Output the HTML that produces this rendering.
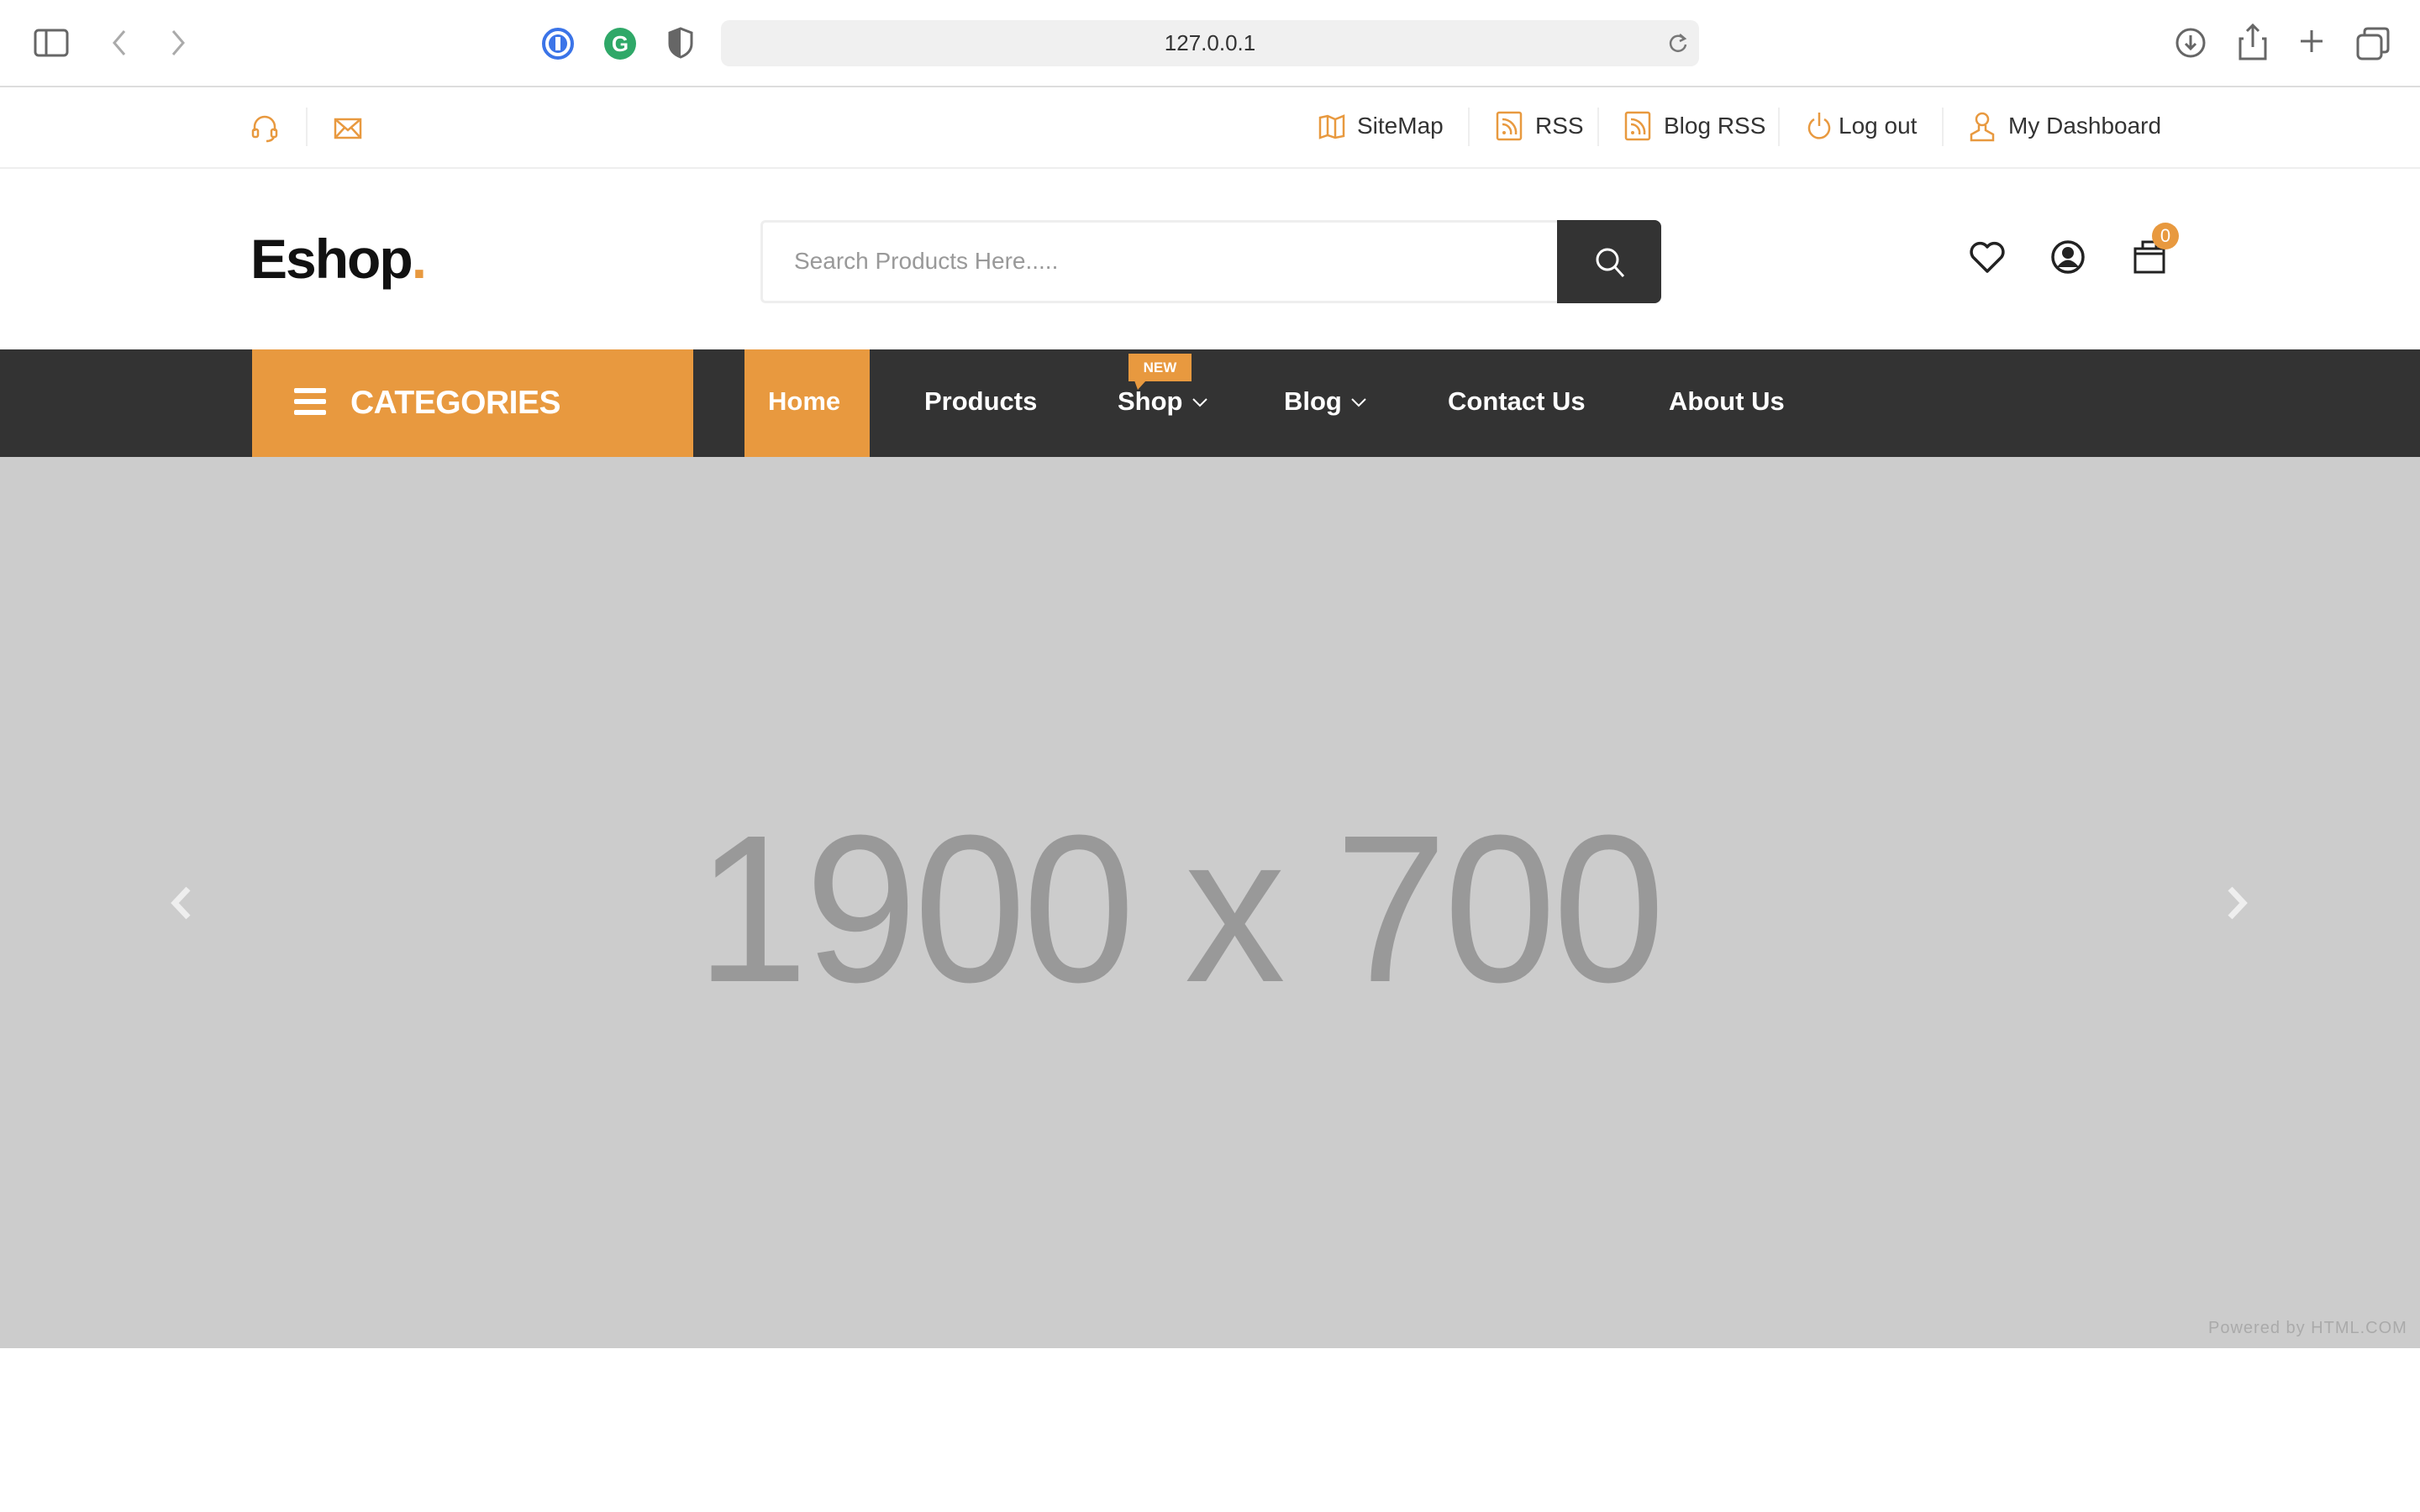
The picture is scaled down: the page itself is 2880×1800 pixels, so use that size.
<!DOCTYPE html>
<html><head><meta charset="utf-8">
<style>
*{margin:0;padding:0;box-sizing:border-box}
html,body{width:2880px;height:1800px;overflow:hidden;background:#fff;font-family:"Liberation Sans",sans-serif;position:relative}
.a{position:absolute}
svg{position:absolute}
.tb{font-size:28px;color:#333;top:133px;line-height:34px}
.sep{position:absolute;width:2px;background:#eee;top:128px;height:46px}
.nav{font-size:31px;font-weight:bold;color:#fff;top:458px;line-height:40px}
</style></head><body>
<!-- browser chrome -->
<div class="a" style="left:0;top:0;width:2880px;height:104px;background:#fff;border-bottom:2px solid #ddd"></div>
<svg style="left:40px;top:34px" width="42" height="34"><rect x="2" y="2" width="38" height="30" rx="4" fill="none" stroke="#666" stroke-width="3"/><line x1="15" y1="2" x2="15" y2="32" stroke="#666" stroke-width="3"/></svg>
<svg style="left:130px;top:34px" width="24" height="34"><path d="M18 3 L6 17 L18 31" fill="none" stroke="#aaa" stroke-width="3"/></svg>
<svg style="left:200px;top:34px" width="24" height="34"><path d="M6 3 L18 17 L6 31" fill="none" stroke="#aaa" stroke-width="3"/></svg>
<svg style="left:644px;top:32px" width="40" height="40"><circle cx="20" cy="20" r="17" fill="none" stroke="#3b74e8" stroke-width="4"/><circle cx="20" cy="20" r="11" fill="#3b74e8"/><rect x="17" y="12" width="6" height="16" fill="#fff"/></svg>
<svg style="left:718px;top:32px" width="40" height="40"><circle cx="20" cy="20" r="19" fill="#2fa868"/><text x="20" y="29" font-size="26" font-weight="bold" fill="#fff" text-anchor="middle" font-family="Liberation Sans">G</text></svg>
<svg style="left:795px;top:32px" width="30" height="38"><path d="M15 2 L28 7 V20 Q28 31 15 36 Q2 31 2 20 V7 Z" fill="none" stroke="#666" stroke-width="3"/><path d="M15 2 L2 7 V20 Q2 31 15 36 Z" fill="#666"/></svg>
<div class="a" style="left:858px;top:24px;width:1164px;height:55px;background:#f0f0f0;border-radius:10px;text-align:center;font-size:26px;line-height:55px;color:#333">127.0.0.1</div>
<svg style="left:1984px;top:36px" width="26" height="30"><path d="M20 10 A9 9 0 1 0 22 17" fill="none" stroke="#777" stroke-width="2.5"/><path d="M15 5 L21 10 L15 13" fill="none" stroke="#777" stroke-width="2.5"/></svg>
<svg style="left:2588px;top:32px" width="38" height="38"><circle cx="19" cy="19" r="16" fill="none" stroke="#666" stroke-width="3"/><path d="M19 10 V26 M13 20 L19 26 L25 20" fill="none" stroke="#666" stroke-width="3"/></svg>
<svg style="left:2664px;top:28px" width="34" height="44"><path d="M6 18 H2 V42 H32 V18 H28 M17 2 V28 M10 9 L17 2 L24 9" fill="none" stroke="#666" stroke-width="3"/></svg>
<svg style="left:2736px;top:34px" width="30" height="30"><path d="M15 2 V28 M2 15 H28" stroke="#666" stroke-width="3"/></svg>
<svg style="left:2804px;top:32px" width="40" height="40"><rect x="2" y="10" width="28" height="28" rx="5" fill="#fff" stroke="#666" stroke-width="3"/><path d="M10 10 V6 Q10 2 14 2 H34 Q38 2 38 6 V26 Q38 30 34 30 H30" fill="none" stroke="#666" stroke-width="3"/></svg>

<!-- top bar -->
<div class="a" style="left:0;top:199px;width:2880px;height:2px;background:#eee"></div>
<svg style="left:298px;top:136px" width="34" height="34"><path d="M5 20 V15 A12 12 0 0 1 29 15 V20" fill="none" stroke="#e8993f" stroke-width="2.5"/><rect x="3" y="18" width="6" height="9" rx="2" fill="none" stroke="#e8993f" stroke-width="2.5"/><rect x="25" y="18" width="6" height="9" rx="2" fill="none" stroke="#e8993f" stroke-width="2.5"/><path d="M28 27 Q26 32 19 32" fill="none" stroke="#e8993f" stroke-width="2.5"/></svg>
<div class="sep" style="left:364px"></div>
<svg style="left:397px;top:140px" width="34" height="26"><rect x="2" y="2" width="30" height="22" fill="none" stroke="#e8993f" stroke-width="2.5"/><path d="M2 2 L17 15 L32 2 M2 24 L13 12 M32 24 L21 12" fill="none" stroke="#e8993f" stroke-width="2.5"/></svg>
<svg style="left:1569px;top:136px" width="32" height="30"><path d="M2 4 L11 2 L20 6 L30 2 V26 L20 28 L11 25 L2 28 Z M11 2 V25 M20 6 V28" fill="none" stroke="#e8993f" stroke-width="2.5"/></svg>
<div class="a tb" style="left:1615px">SiteMap</div>
<div class="sep" style="left:1747px"></div>
<svg style="left:1780px;top:132px" width="32" height="36"><rect x="2" y="2" width="28" height="32" rx="2" fill="none" stroke="#e8993f" stroke-width="2.5"/><path d="M8 10 A16 16 0 0 1 24 28 M8 16 A10 10 0 0 1 18 28" fill="none" stroke="#e8993f" stroke-width="2.5"/><circle cx="10" cy="26" r="2" fill="#e8993f"/></svg>
<div class="a tb" style="left:1827px">RSS</div>
<div class="sep" style="left:1901px"></div>
<svg style="left:1933px;top:132px" width="32" height="36"><rect x="2" y="2" width="28" height="32" rx="2" fill="none" stroke="#e8993f" stroke-width="2.5"/><path d="M8 10 A16 16 0 0 1 24 28 M8 16 A10 10 0 0 1 18 28" fill="none" stroke="#e8993f" stroke-width="2.5"/><circle cx="10" cy="26" r="2" fill="#e8993f"/></svg>
<div class="a tb" style="left:1980px">Blog RSS</div>
<div class="sep" style="left:2116px"></div>
<svg style="left:2150px;top:132px" width="30" height="38"><path d="M9 10 A12 12 0 1 0 21 10" fill="none" stroke="#e8993f" stroke-width="2.5"/><path d="M15 2 V18" stroke="#e8993f" stroke-width="2.5"/></svg>
<div class="a tb" style="left:2188px">Log out</div>
<div class="sep" style="left:2311px"></div>
<svg style="left:2343px;top:132px" width="32" height="38"><circle cx="16" cy="10" r="7" fill="none" stroke="#e8993f" stroke-width="2.5"/><path d="M12 17 V23 L3 28 V35 H29 V28 L20 23 V17" fill="none" stroke="#e8993f" stroke-width="2.5"/></svg>
<div class="a tb" style="left:2390px">My Dashboard</div>

<!-- header -->
<div class="a" style="left:298px;top:263px;font-size:66px;font-weight:bold;color:#111;line-height:90px;letter-spacing:-2px">Eshop<span style="color:#e8993f">.</span></div>
<div class="a" style="left:905px;top:262px;width:950px;height:99px;border:3px solid #eee;border-right:none;border-radius:6px 0 0 6px"></div>
<div class="a" style="left:945px;top:292px;font-size:28px;color:#999;line-height:38px">Search Products Here.....</div>
<div class="a" style="left:1853px;top:262px;width:124px;height:99px;background:#333;border-radius:0 8px 8px 0"></div>
<svg style="left:1896px;top:293px" width="40" height="40"><circle cx="17" cy="16" r="12" fill="none" stroke="#fff" stroke-width="3"/><path d="M26 25 L36 36" stroke="#fff" stroke-width="3"/></svg>
<svg style="left:2343px;top:287px" width="44" height="38"><path d="M22 36 L5 19 A9 9 0 0 1 22 7 A9 9 0 0 1 39 19 Z" fill="none" stroke="#222" stroke-width="3.5" stroke-linejoin="round"/></svg>
<svg style="left:2440px;top:285px" width="42" height="42"><circle cx="21" cy="21" r="18" fill="none" stroke="#222" stroke-width="3.5"/><circle cx="21" cy="16" r="7" fill="#222"/><path d="M8 33 Q21 16 34 33" fill="#222"/></svg>
<svg style="left:2538px;top:282px" width="40" height="44"><rect x="3" y="14" width="34" height="28" fill="none" stroke="#222" stroke-width="3"/><path d="M3 20 H37" stroke="#222" stroke-width="3"/><path d="M12 14 V6 H28 V14" fill="none" stroke="#222" stroke-width="3"/></svg>
<div class="a" style="left:2561px;top:265px;width:32px;height:32px;border-radius:16px;background:#e8993f;color:#fff;font-size:22px;text-align:center;line-height:32px">0</div>

<!-- nav -->
<div class="a" style="left:0;top:416px;width:2880px;height:128px;background:#333"></div>
<div class="a" style="left:300px;top:416px;width:525px;height:128px;background:#e8993f"></div>
<svg style="left:350px;top:462px" width="40" height="34"><rect x="0" y="0" width="38" height="6" rx="2" fill="#fff"/><rect x="0" y="13" width="38" height="6" rx="2" fill="#fff"/><rect x="0" y="26" width="38" height="6" rx="2" fill="#fff"/></svg>
<div class="a" style="left:417px;top:457px;font-size:39px;font-weight:bold;color:#fff;line-height:46px;letter-spacing:-0.5px">CATEGORIES</div>
<div class="a" style="left:886px;top:416px;width:149px;height:128px;background:#e8993f"></div>
<div class="a nav" style="left:914px">Home</div>
<div class="a nav" style="left:1100px">Products</div>
<div class="a nav" style="left:1330px">Shop</div>
<svg style="left:1418px;top:472px" width="20" height="14"><path d="M2 3 L10 11 L18 3" fill="none" stroke="#fff" stroke-width="2"/></svg>
<div class="a" style="left:1343px;top:421px;width:75px;height:33px;background:#e8993f;color:#fff;font-size:17px;font-weight:bold;text-align:center;line-height:33px">NEW</div>
<svg style="left:1350px;top:453px" width="16" height="12"><path d="M0 0 H14 L4 11 Z" fill="#e8993f"/></svg>
<div class="a nav" style="left:1528px">Blog</div>
<svg style="left:1607px;top:472px" width="20" height="14"><path d="M2 3 L10 11 L18 3" fill="none" stroke="#fff" stroke-width="2"/></svg>
<div class="a nav" style="left:1723px">Contact Us</div>
<div class="a nav" style="left:1986px">About Us</div>

<!-- hero -->
<div class="a" style="left:0;top:544px;width:2880px;height:1061px;background:#cccccc"></div>
<div class="a" style="left:-37px;top:952px;width:2880px;text-align:center;font-size:250px;color:#999;line-height:260px;letter-spacing:-4px;transform:scaleX(0.96)">1900 x 700</div>
<svg style="left:200px;top:1054px" width="30" height="42"><path d="M24 4 L8 21 L24 38" fill="none" stroke="#eee" stroke-width="7"/></svg>
<svg style="left:2648px;top:1054px" width="30" height="42"><path d="M6 4 L22 21 L6 38" fill="none" stroke="#eee" stroke-width="7"/></svg>
<div class="a" style="left:2628px;top:1570px;font-size:20px;color:#aaa;letter-spacing:1px">Powered by HTML.COM</div>
</body></html>
